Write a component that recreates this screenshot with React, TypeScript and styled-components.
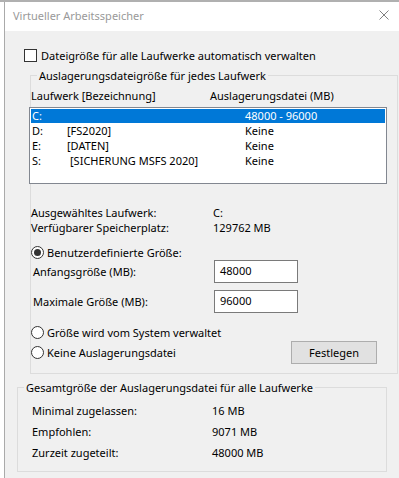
import React from "react";
import styled, { createGlobalStyle } from "styled-components";

const Global = createGlobalStyle`
  html, body { margin: 0; padding: 0; background: #ffffff; }
  * { box-sizing: border-box; }
`;

const FONT = `"Noto Sans", "Open Sans", sans-serif`;

const Screen = styled.div`
  width: 399px;
  height: 478px;
  overflow: hidden;
  background: #ffffff;
  font-family: ${FONT};
  font-size: 11px;
  color: #000;
  display: flex;
  flex-direction: column;
`;

const TopStrip = styled.div`
  height: 2px;
  flex: none;
  background: #b0b0b0;
`;

const Window = styled.div`
  flex: 1;
  margin-left: 4px;
  border-left: 1px solid #aaaaaa;
  display: flex;
  flex-direction: column;
  min-height: 0;
`;

const TitleBar = styled.div`
  height: 29px;
  flex: none;
  background: #ffffff;
  display: flex;
  align-items: flex-start;
  justify-content: space-between;
  padding: 6px 10px 0 8px;
`;

const TitleText = styled.span`
  color: #999999;
  line-height: 15px;
`;

const CloseIcon = styled.svg`
  margin-top: 2px;
  width: 10px;
  height: 10px;
`;

const Body = styled.div`
  flex: 1;
  background: #f0f0f0;
  padding-top: 17px;
  display: flex;
  flex-direction: column;
`;

const CheckRow = styled.label`
  display: flex;
  align-items: center;
  height: 15px;
  line-height: 15px;
  margin-left: 19px;
  gap: 4px;
`;

const CheckBox = styled.span`
  width: 13px;
  height: 13px;
  border: 1px solid #333333;
  background: #ffffff;
  flex: none;
`;

const Group = styled.fieldset<{ $left: number; $width: number; $top: number; $padBottom: number }>`
  margin: ${(p) => p.$top}px 0 0 ${(p) => p.$left}px;
  width: ${(p) => p.$width}px;
  border: 1px solid #dcdcdc;
  padding: 0 0 ${(p) => p.$padBottom}px 0;
  min-width: 0;
`;

const Legend = styled.legend`
  margin-left: 6px;
  padding: 0 2px;
  line-height: 15px;
  height: 15px;
`;

const HeaderRow = styled.div`
  display: grid;
  grid-template-columns: 179px auto;
  height: 15px;
  line-height: 15px;
  margin-top: 5px;
`;

const ListBox = styled.div`
  margin: 4px 0 0 -2px;
  width: 358px;
  height: 77px;
  border: 1px solid #828790;
  background: #ffffff;
  padding: 1px;
  display: flex;
  flex-direction: column;
  gap: 1px;
`;

const ListRow = styled.div<{ $selected?: boolean }>`
  display: grid;
  grid-template-columns: 35px 178px auto;
  height: 14px;
  line-height: 14px;
  padding-left: 1px;
  background: ${(p) => (p.$selected ? "#0078d7" : "transparent")};
  color: ${(p) => (p.$selected ? "#ffffff" : "#000000")};
`;

const DriveLabel = styled.span<{ $shift: number }>`
  padding-left: ${(p) => p.$shift}px;
`;

const InfoGrid = styled.div<{ $col: number; $top: number; $gap: number; $indent: number }>`
  display: grid;
  grid-template-columns: ${(p) => p.$col}px auto;
  grid-auto-rows: 15px;
  row-gap: ${(p) => p.$gap}px;
  line-height: 15px;
  margin-top: ${(p) => p.$top}px;
  padding-left: ${(p) => p.$indent}px;
`;

const RadioRow = styled.label<{ $top: number }>`
  display: flex;
  align-items: center;
  height: 15px;
  line-height: 15px;
  margin-top: ${(p) => p.$top}px;
  gap: 3px;
`;

const Radio = styled.span<{ $checked?: boolean }>`
  width: 13px;
  height: 13px;
  border-radius: 50%;
  border: 1px solid #333333;
  background: #ffffff;
  flex: none;
  display: flex;
  align-items: center;
  justify-content: center;
  &::after {
    content: "";
    display: ${(p) => (p.$checked ? "block" : "none")};
    width: 7px;
    height: 7px;
    border-radius: 50%;
    background: #333333;
  }
`;

const FieldRow = styled.div<{ $top: number }>`
  display: grid;
  grid-template-columns: 181px 84px;
  align-items: center;
  height: 23px;
  margin-top: ${(p) => p.$top}px;
  padding-left: 2px;
`;

const Input = styled.div`
  height: 23px;
  border: 1px solid #7a7a7a;
  background: #ffffff;
  padding-left: 5px;
  line-height: 20px;
`;

const OptionRow = styled.div`
  display: grid;
  grid-template-columns: 260px 86px;
  align-items: center;
  margin-top: 1px;
`;

const Button = styled.button`
  height: 23px;
  width: 86px;
  border: 1px solid #adadad;
  background: #e1e1e1;
  font-family: ${FONT};
  font-size: 11px;
  color: #000;
  padding: 0;
`;

const drives = [
  { letter: "C:", label: "", file: "48000 - 96000", selected: true, shift: 0 },
  { letter: "D:", label: "[FS2020]", file: "Keine", shift: 0 },
  { letter: "E:", label: "[DATEN]", file: "Keine", shift: 0 },
  { letter: "S:", label: "[SICHERUNG MSFS 2020]", file: "Keine", shift: 3 },
];

export default function App() {
  return (
    <Screen>
      <Global />
      <TopStrip />
      <Window>
        <TitleBar>
          <TitleText>Virtueller Arbeitsspeicher</TitleText>
          <CloseIcon viewBox="0 0 10 10">
            <path d="M0.5 0.5 L9.5 9.5 M9.5 0.5 L0.5 9.5" stroke="#808080" strokeWidth="1" fill="none" />
          </CloseIcon>
        </TitleBar>
        <Body>
          <CheckRow>
            <CheckBox />
            <span>Dateigröße für alle Laufwerke automatisch verwalten</span>
          </CheckRow>

          <Group $left={25} $width={368} $top={5} $padBottom={9}>
            <Legend>Auslagerungsdateigröße für jedes Laufwerk</Legend>
            <HeaderRow>
              <span>Laufwerk [Bezeichnung]</span>
              <span>Auslagerungsdatei (MB)</span>
            </HeaderRow>
            <ListBox>
              {drives.map((d) => (
                <ListRow key={d.letter} $selected={d.selected}>
                  <span>{d.letter}</span>
                  <DriveLabel $shift={d.shift}>{d.label}</DriveLabel>
                  <span>{d.file}</span>
                </ListRow>
              ))}
            </ListBox>
            <InfoGrid $col={182} $top={21} $gap={0} $indent={0}>
              <span>Ausgewähltes Laufwerk:</span>
              <span>C:</span>
              <span>Verfügbarer Speicherplatz:</span>
              <span>129762 MB</span>
            </InfoGrid>
            <RadioRow $top={10}>
              <Radio $checked />
              <span>Benutzerdefinierte Größe:</span>
            </RadioRow>
            <FieldRow $top={0}>
              <span>Anfangsgröße (MB):</span>
              <Input>48000</Input>
            </FieldRow>
            <FieldRow $top={7}>
              <span>Maximale Größe (MB):</span>
              <Input>96000</Input>
            </FieldRow>
            <RadioRow $top={12}>
              <Radio />
              <span>Größe wird vom System verwaltet</span>
            </RadioRow>
            <OptionRow>
              <RadioRow $top={0}>
                <Radio />
                <span>Keine Auslagerungsdatei</span>
              </RadioRow>
              <Button>Festlegen</Button>
            </OptionRow>
          </Group>

          <Group $left={12} $width={370} $top={6} $padBottom={11}>
            <Legend>Gesamtgröße der Auslagerungsdatei für alle Laufwerke</Legend>
            <InfoGrid $col={180} $top={8} $gap={6} $indent={14}>
              <span>Minimal zugelassen:</span>
              <span>16 MB</span>
              <span>Empfohlen:</span>
              <span>9071 MB</span>
              <span>Zurzeit zugeteilt:</span>
              <span>48000 MB</span>
            </InfoGrid>
          </Group>
        </Body>
      </Window>
    </Screen>
  );
}
